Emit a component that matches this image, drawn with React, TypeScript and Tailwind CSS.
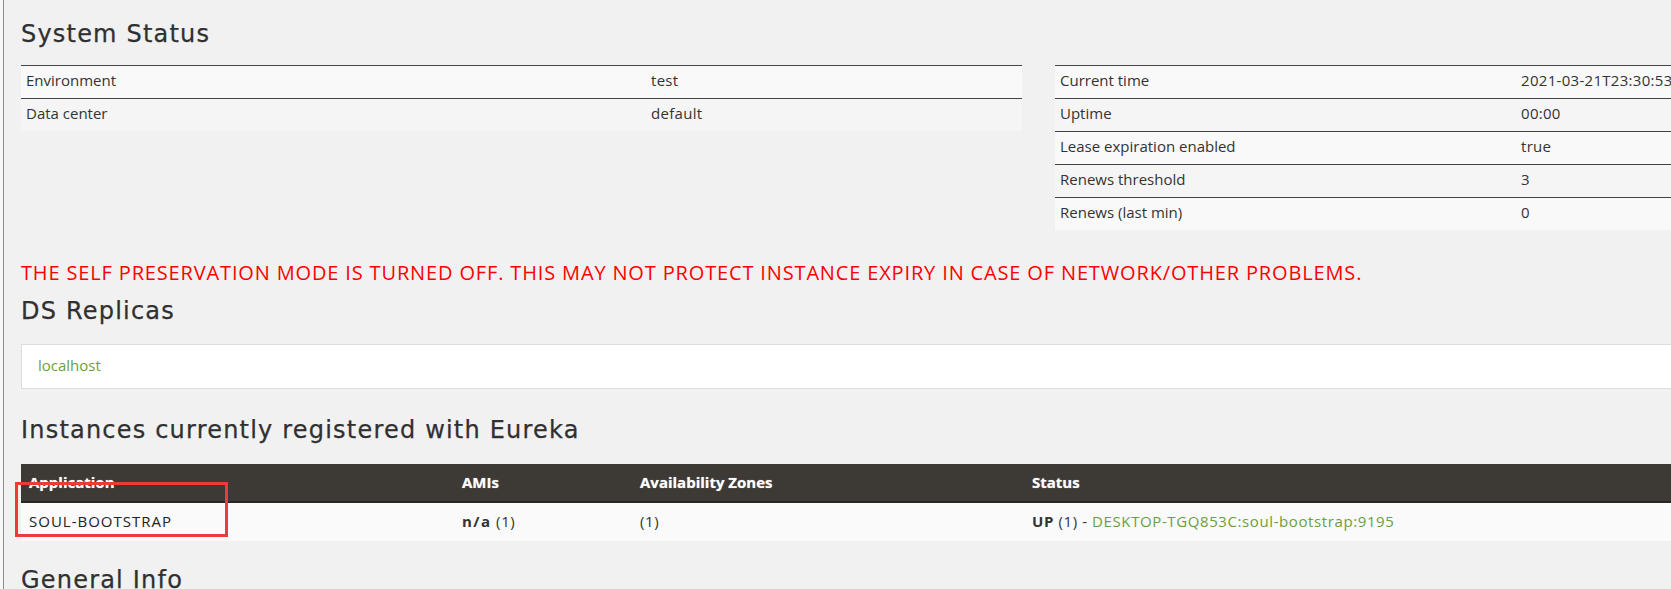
const leftRows = [
  ["Environment", "test"],
  ["Data center", "default"],
];
const rightRows = [
  ["Current time", "2021-03-21T23:30:53 +0800"],
  ["Uptime", "00:00"],
  ["Lease expiration enabled", "true"],
  ["Renews threshold", "3"],
  ["Renews (last min)", "0"],
];

function KVTable({ rows, labelW }: { rows: string[][]; labelW: string }) {
  return (
    <div className="w-[1001px] shrink-0 flex flex-col">
      {rows.map((r, i) => (
        <div
          key={r[0]}
          className={`flex shrink-0 h-[33px] border-t border-[#444444] ${i % 2 === 0 ? "bg-[#f9f9f9]" : "bg-[#f5f5f5]"}`}
        >
          <div className={`${labelW} shrink-0 px-[5px] pt-[3px] leading-[22px]`}>{r[0]}</div>
          <div className="flex-1 px-[5px] pt-[3px] leading-[22px] tracking-[0.3px] whitespace-nowrap">{r[1]}</div>
        </div>
      ))}
    </div>
  );
}

function Heading({ children, className = "" }: { children: React.ReactNode; className?: string }) {
  return (
    <h2
      className={`font-['DejaVu_Sans',sans-serif] text-[24px] leading-[30px] tracking-[1.2px] text-[#303030] [-webkit-text-stroke:0.25px_#303030] whitespace-nowrap ${className}`}
    >
      {children}
    </h2>
  );
}

export default function App() {
  return (
    <div className="relative flex w-[1671px] h-[589px] overflow-hidden bg-[#f1f1f1] font-['Open_Sans',sans-serif] text-[15px] text-[#333333]">
      <div className="w-[4px] shrink-0 bg-[#f7f7f7] border-r border-[#8c8c8c]" />
      <div className="w-[2052px] shrink-0 pl-[17px]">
        <Heading className="mt-[19px]">System Status</Heading>
        <div className="flex items-start gap-[33px] mt-[16px]">
          <KVTable rows={leftRows} labelW="w-[625px]" />
          <KVTable rows={rightRows} labelW="w-[461px]" />
        </div>
        <div className="mt-[29px] text-[20px] leading-[28px] font-medium tracking-[0.85px] text-[#ff0000] whitespace-nowrap">
          THE SELF PRESERVATION MODE IS TURNED OFF. THIS MAY NOT PROTECT INSTANCE EXPIRY IN CASE OF NETWORK/OTHER PROBLEMS.
        </div>
        <Heading className="mt-[9px]">DS Replicas</Heading>
        <div className="mt-[18px] h-[45px] border border-[#dddddd] bg-white pl-[16px] pt-[9px] leading-[22px] text-[#6a9f3e]">
          localhost
        </div>
        <Heading className="mt-[26px]">Instances currently registered with Eureka</Heading>
        <div className="mt-[19px]">
          <div className="grid grid-cols-[433px_178px_392px_1fr] h-[39px] bg-[#3d3a35] border-b-2 border-[#2a2723] font-bold text-white [text-shadow:0_0_1px_rgba(255,255,255,0.6)]">
            <div className="px-[8px] pt-[7px] leading-[22px]">Application</div>
            <div className="px-[8px] pt-[7px] leading-[22px]">AMIs</div>
            <div className="px-[8px] pt-[7px] leading-[22px]">Availability Zones</div>
            <div className="px-[8px] pt-[7px] leading-[22px]">Status</div>
          </div>
          <div className="grid grid-cols-[433px_178px_392px_1fr] h-[38px] bg-[#fafafa]">
            <div className="px-[8px] pt-[7px] leading-[22px] tracking-[1px] text-[#222222]">SOUL-BOOTSTRAP</div>
            <div className="px-[8px] pt-[7px] leading-[22px] tracking-[0.6px]">
              <b className="tracking-[1.5px]">n/a</b> (1)
            </div>
            <div className="px-[8px] pt-[7px] leading-[22px] tracking-[0.6px]">(1)</div>
            <div className="px-[8px] pt-[7px] leading-[22px] tracking-[0.6px] whitespace-nowrap">
              <b>UP</b> (1) - <span className="text-[#6a9f3e]">DESKTOP-TGQ853C:soul-bootstrap:9195</span>
            </div>
          </div>
        </div>
        <Heading className="mt-[24px]">General Info</Heading>
      </div>
      <div className="absolute left-[15px] top-[482px] w-[213px] h-[55px] border-[3px] border-[#f03a3a]" />
    </div>
  );
}
